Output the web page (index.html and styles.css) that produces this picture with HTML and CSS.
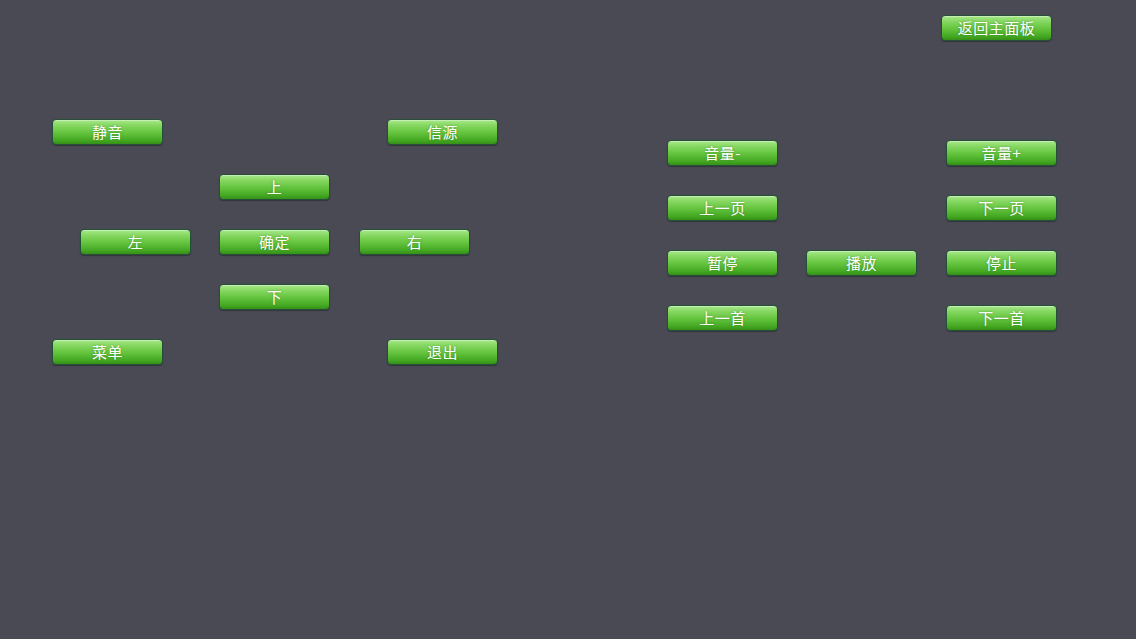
FILE: index.html
```html
<!DOCTYPE html>
<html>
<head>
<meta charset="utf-8">
<link rel="stylesheet" href="styles.css">
</head>
<body>
<div class="pad">
  <button class="btn b-back">返回主面板</button>

  <button class="btn l1">静音</button>
  <button class="btn l2">信源</button>
  <button class="btn l3">上</button>
  <button class="btn l4">左</button>
  <button class="btn l5">确定</button>
  <button class="btn l6">右</button>
  <button class="btn l7">下</button>
  <button class="btn l8">菜单</button>
  <button class="btn l9">退出</button>

  <button class="btn r1">音量-</button>
  <button class="btn r2">音量+</button>
  <button class="btn r3">上一页</button>
  <button class="btn r4">下一页</button>
  <button class="btn r5">暂停</button>
  <button class="btn r6">播放</button>
  <button class="btn r7">停止</button>
  <button class="btn r8">上一首</button>
  <button class="btn r9">下一首</button>
</div>
</body>
</html>
```
FILE: styles.css
```css
html, body {
  margin: 0;
  padding: 0;
  background: #4a4a54;
  width: 1136px;
  height: 639px;
  overflow: hidden;
}
.pad {
  position: relative;
  width: 1136px;
  height: 639px;
}
.btn {
  position: absolute;
  width: 111px;
  height: 26px;
  padding: 0;
  margin: 0;
  box-sizing: border-box;
  border: 1px solid #24503a;
  border-radius: 4px;
  background: linear-gradient(to bottom, #a8e88c 0%, #86d862 22%, #62c23c 55%, #44a822 85%, #358f18 100%);
  box-shadow: inset 0 1px 0 rgba(255,255,255,0.35), 0 1px 1px rgba(0,0,0,0.3);
  color: #ffffff;
  font-family: "Noto Sans CJK SC", "Noto Sans", sans-serif;
  font-size: 15px;
  line-height: 24px;
  text-align: center;
  letter-spacing: 0.5px;
  text-shadow: 0 0 2px rgba(40,90,20,0.5);
}
.b-back { left: 941px; top: 15px; }

.l1 { left: 52px;  top: 119px; }
.l2 { left: 387px; top: 119px; }
.l3 { left: 219px; top: 174px; }
.l4 { left: 80px;  top: 229px; }
.l5 { left: 219px; top: 229px; }
.l6 { left: 359px; top: 229px; }
.l7 { left: 219px; top: 284px; }
.l8 { left: 52px;  top: 339px; }
.l9 { left: 387px; top: 339px; }

.r1 { left: 667px; top: 140px; }
.r2 { left: 946px; top: 140px; }
.r3 { left: 667px; top: 195px; }
.r4 { left: 946px; top: 195px; }
.r5 { left: 667px; top: 250px; }
.r6 { left: 806px; top: 250px; }
.r7 { left: 946px; top: 250px; }
.r8 { left: 667px; top: 305px; }
.r9 { left: 946px; top: 305px; }
```
